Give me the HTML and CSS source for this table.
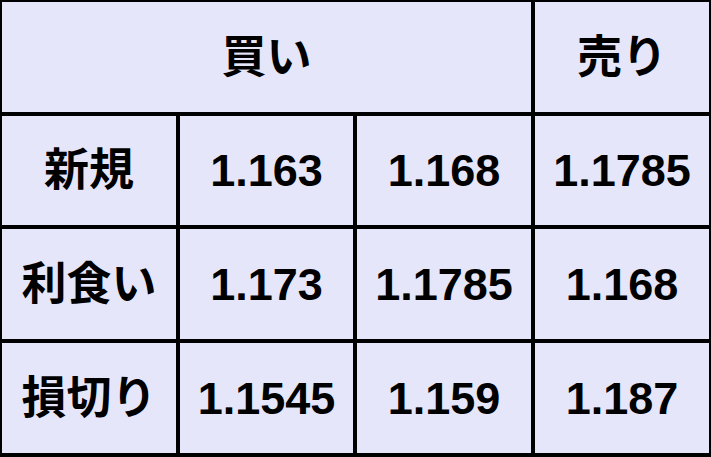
FILE: index.html
```html
<!DOCTYPE html>
<html lang="ja">
<head>
<meta charset="utf-8">
<title>売買表</title>
<link rel="stylesheet" href="styles.css">
</head>
<body>
<div class="grid">
  <div class="cell span3">買い</div>
  <div class="cell">売り</div>
  <div class="cell">新規</div>
  <div class="cell">1.163</div>
  <div class="cell">1.168</div>
  <div class="cell">1.1785</div>
  <div class="cell">利食い</div>
  <div class="cell">1.173</div>
  <div class="cell">1.1785</div>
  <div class="cell">1.168</div>
  <div class="cell">損切り</div>
  <div class="cell">1.1545</div>
  <div class="cell">1.159</div>
  <div class="cell">1.187</div>
</div>
</body>
</html>
```
FILE: styles.css
```css
html, body {
  margin: 0;
  padding: 0;
  background: #000;
}
.grid {
  box-sizing: border-box;
  width: 711px;
  height: 457px;
  background: #000;
  padding: 2px 2px 4px 2px;
  display: grid;
  grid-template-columns: 174px 173px 174px 1fr;
  grid-template-rows: 110px 109px 110px 1fr;
  gap: 4px;
}
.cell {
  background: #e6e6fa;
  color: #000;
  display: flex;
  align-items: center;
  justify-content: center;
  font-family: "Liberation Sans", "Noto Sans CJK JP", sans-serif;
  font-weight: bold;
  font-size: 45px;
  line-height: 1;
  white-space: nowrap;
}
.span3 {
  grid-column: span 3;
}
```
